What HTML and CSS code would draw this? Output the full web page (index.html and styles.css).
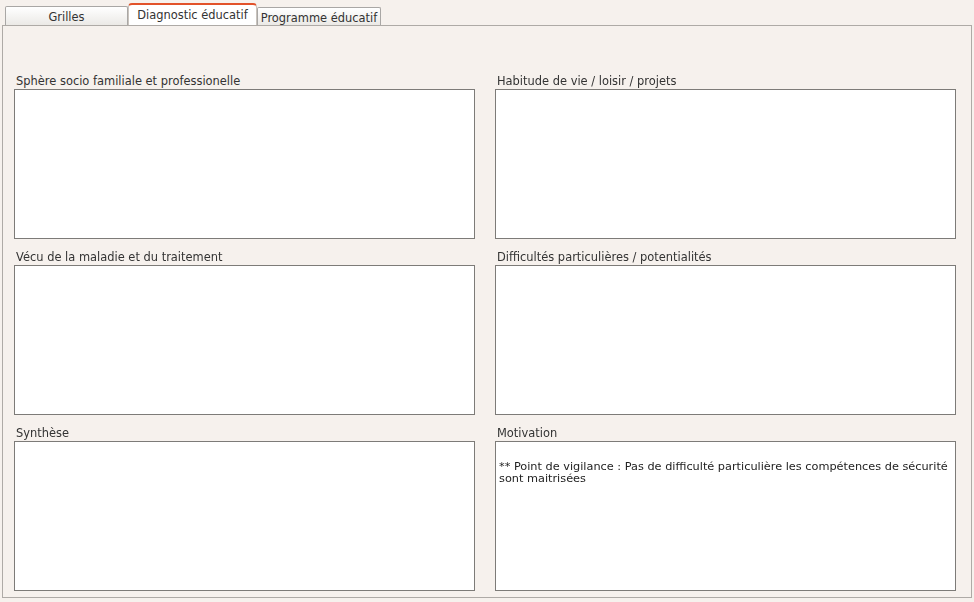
FILE: index.html
```html
<!DOCTYPE html>
<html lang="fr">
<head>
    <meta charset="UTF-8">
    <title>Diagnostic éducatif</title>
    <link rel="stylesheet" href="styles.css">
</head>
<body>
    <div class="tabs">
        <div class="tab grilles">Grilles</div>
        <div class="tab active">Diagnostic éducatif</div>
        <div class="tab programme">Programme éducatif</div>
    </div>
    <div class="panel">
        <div class="field">
            <label for="sphere">Sphère socio familiale et professionelle</label>
            <textarea id="sphere" autofocus></textarea>
        </div>
        <div class="field">
            <label for="habitude">Habitude de vie / loisir / projets</label>
            <textarea id="habitude"></textarea>
        </div>
        <div class="field">
            <label for="vecu">Vécu de la maladie et du traitement</label>
            <textarea id="vecu"></textarea>
        </div>
        <div class="field">
            <label for="difficultes">Difficultés particulières / potentialités</label>
            <textarea id="difficultes"></textarea>
        </div>
        <div class="field">
            <label for="synthese">Synthèse</label>
            <textarea id="synthese"></textarea>
        </div>
        <div class="field">
            <label for="motivation">Motivation</label>
            <textarea id="motivation">

** Point de vigilance : Pas de difficulté particulière les compétences de sécurité sont maitrisées</textarea>
        </div>
    </div>
</body>
</html>
```

FILE: styles.css
```css
body {
    margin: 0;
    background-color: #f6f1ed;
    font-family: "DejaVu Sans", Verdana, sans-serif;
    font-size: 11.45px;
    color: #222;
}
.tabs {
    display: flex;
    align-items: flex-end;
    height: 25px;
    padding-left: 5px;
}
.tab {
    box-sizing: border-box;
    text-align: center;
    border: 1px solid #a9a7a5;
    border-bottom: none;
    border-radius: 2px 2px 0 0;
    background: linear-gradient(#ffffff, #ebe9e6);
    color: #333;
    white-space: nowrap;
}
.grilles {
    width: 123px;
    height: 19px;
    line-height: 21px;
}
.active {
    width: 129px;
    height: 22px;
    line-height: 21px;
    background: #fff;
    border-color: #c9c3bd;
    border-top: 2px solid #e2522a;
    border-radius: 4px 4px 0 0;
}
.programme {
    width: 124px;
    height: 18px;
    line-height: 20px;
}
.panel {
    box-sizing: border-box;
    margin: 0 2px;
    height: 573px;
    border: 1px solid #aeaaa6;
    padding: 47px 15px 0 11px;
    display: grid;
    grid-template-columns: 461px 461px;
    column-gap: 20px;
    row-gap: 10px;
    align-content: start;
}
.field label {
    display: block;
    height: 15px;
    line-height: 16px;
    margin-bottom: 1px;
    padding-left: 2px;
    color: #333;
}
.field textarea {
    box-sizing: border-box;
    display: block;
    width: 461px;
    height: 150px;
    margin: 0;
    padding: 7px 0 2px 3px;
    border: 1px solid #7d7b78;
    background: #fff;
    resize: none;
    outline: none;
    overflow: hidden;
    font-family: "DejaVu Sans", Verdana, sans-serif;
    font-size: 11.3px;
    line-height: 12px;
    color: #222;
}
```
